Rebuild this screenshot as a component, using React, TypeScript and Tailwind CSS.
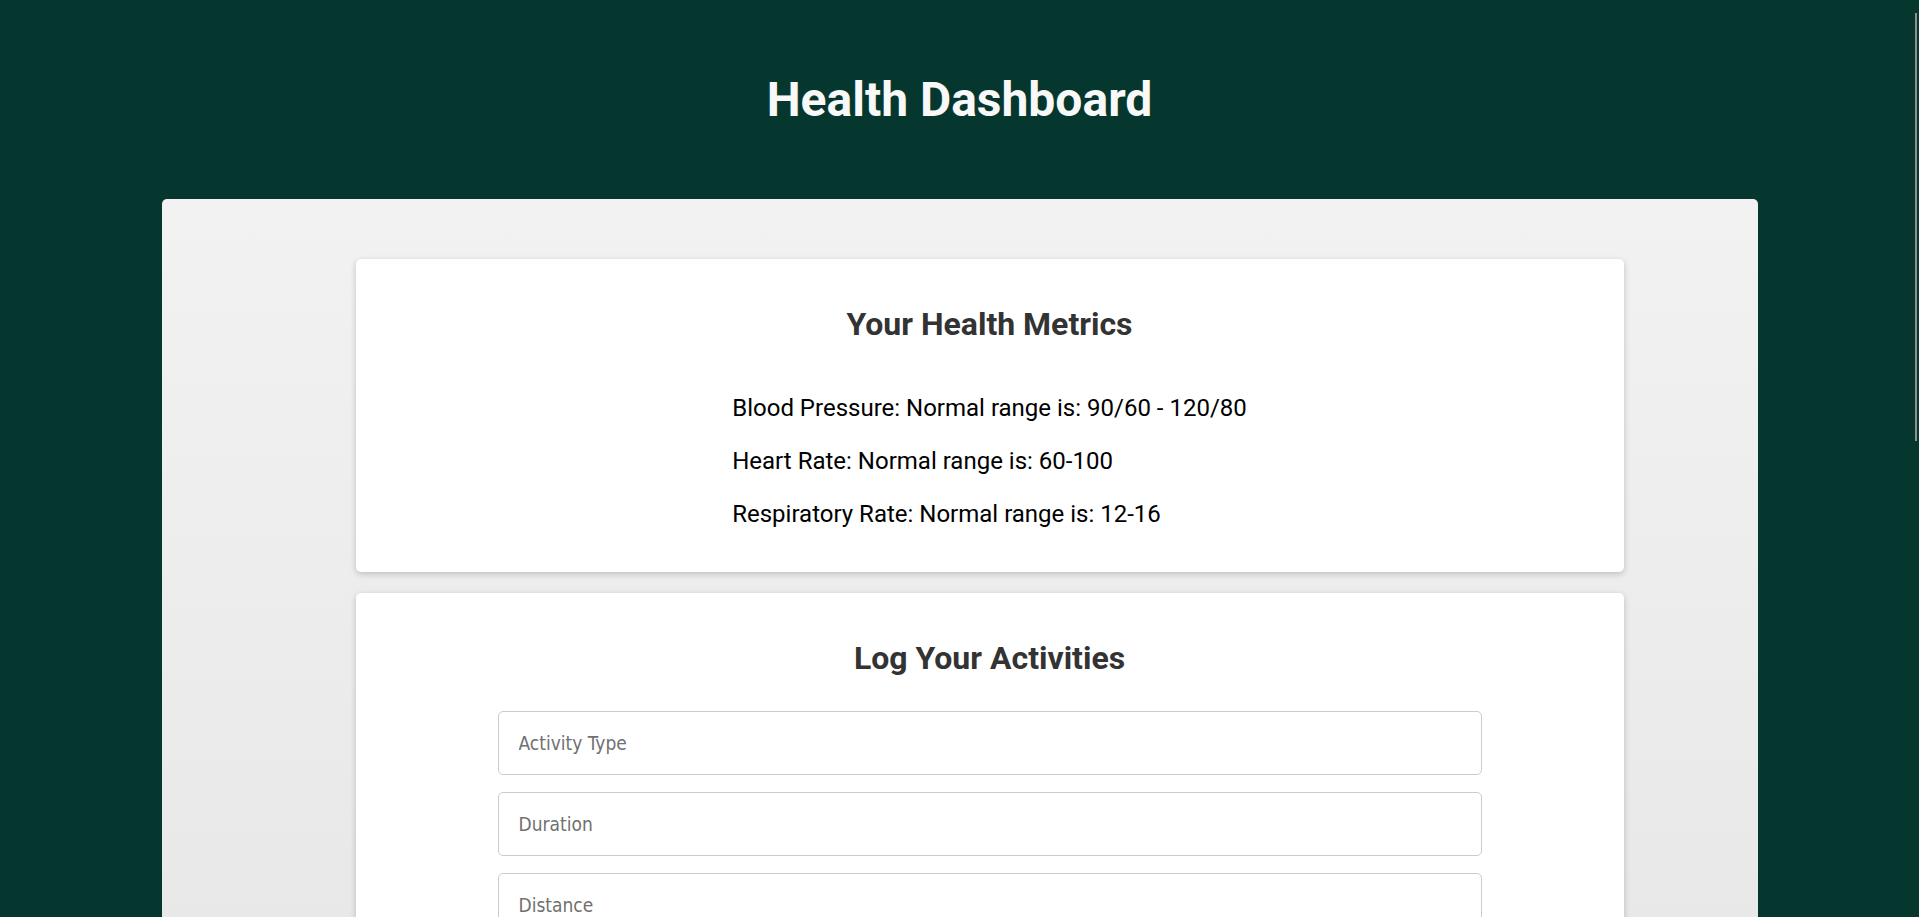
import React from 'react';

const metrics = [
  { label: 'Blood Pressure', range: '90/60 - 120/80' },
  { label: 'Heart Rate', range: '60-100' },
  { label: 'Respiratory Rate', range: '12-16' },
];

const fields = ['Activity Type', 'Duration', 'Distance', 'Calories Burned'];

function Card({ title, children }: { title: string; children: React.ReactNode }) {
  return (
    <section className="bg-white rounded-[5px] shadow-[0_2px_6px_rgba(0,0,0,0.2)] pt-[46px]">
      <h2 className="text-center text-[32px] leading-[38px] font-bold text-[#333]">{title}</h2>
      {children}
    </section>
  );
}

export default function App() {
  return (
    <div className="relative h-screen overflow-hidden bg-[#05372f] font-['Roboto',sans-serif]">
      <header className="h-[199px] flex items-center justify-center">
        <h1 className="text-[48px] leading-[48px] font-bold text-[#f8f8f8]">Health Dashboard</h1>
      </header>

      <main className="mx-auto w-[1596px] min-h-[1200px] rounded-t-[5px] bg-linear-to-b from-[#f2f2f2] to-[#e2e2e2] pt-[60px] pl-[194px] pr-[134px] pb-10">
        <Card title="Your Health Metrics">
          <div className="flex justify-center mt-[49px] pb-[41px]">
            <ul className="flex flex-col gap-[20px] text-[24px] leading-[33px] text-black">
              {metrics.map((m) => (
                <li key={m.label}>
                  {m.label}: Normal range is: {m.range}
                </li>
              ))}
            </ul>
          </div>
        </Card>

        <div className="mt-[21px]">
          <Card title="Log Your Activities">
            <form className="w-[984px] mx-auto mt-[34px] flex flex-col gap-[17px] pb-10">
              {fields.map((f) => (
                <input
                  key={f}
                  type="text"
                  placeholder={f}
                  className="h-[64px] w-full rounded-[5px] border border-[#ccc] px-[20px] text-[19px] font-['DejaVu_Sans_Condensed','DejaVu_Sans',sans-serif] font-stretch-condensed placeholder:text-[#707070] outline-none"
                />
              ))}
              <button
                type="button"
                className="h-[56px] rounded-[5px] bg-[#05372f] text-white text-[20px] font-bold"
              >
                Log Activity
              </button>
            </form>
          </Card>
        </div>
      </main>

      {/* overlay scrollbar thumb */}
      <div className="absolute right-[2px] top-[13px] h-[428px] w-[2px] bg-[#8f8f8f]" />
    </div>
  );
}
